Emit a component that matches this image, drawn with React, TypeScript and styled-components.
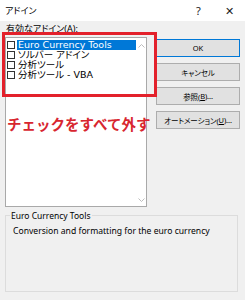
import { createGlobalStyle, styled } from 'styled-components';

const GlobalStyle = createGlobalStyle`
  html, body {
    margin: 0;
    padding: 0;
    background: #f0f0f0;
  }
  * {
    box-sizing: border-box;
  }
`;

const FONT = `'Noto Sans', 'Noto Sans CJK JP', sans-serif`;

/**
 * ダイアログ全体
 */
const Dialog = styled.div`
  position: relative;
  width: 245px;
  height: 300px;
  overflow: hidden;
  background: #f0f0f0;
  font-family: ${FONT};
  font-feature-settings: 'palt';
  color: #000;
`;

const TitleBar = styled.div`
  display: flex;
  align-items: center;
  height: 21px;
  padding-left: 5px;
  background: #fff;
  font-size: 9px;
`;

const Title = styled.div`
  flex: 1;
`;

const TitleButton = styled.div`
  width: 31px;
  text-align: center;
  font-size: 11px;
  color: #222;
`;

const Body = styled.div`
  padding: 0 5px;
`;

const MainRow = styled.div`
  display: flex;
  gap: 9px;
`;

const LeftColumn = styled.div`
  width: 142px;
  display: flex;
  flex-direction: column;
`;

const Label = styled.div`
  height: 16px;
  line-height: 16px;
  padding-left: 1px;
  font-size: 9px;
`;

const ListBox = styled.div`
  display: flex;
  height: 170px;
  background: #fff;
  border: 1px solid #a9a9a9;
`;

const Items = styled.div`
  flex: 1;
  padding-top: 2px;
`;

const Item = styled.div`
  display: flex;
  align-items: center;
  height: 10px;
  padding-left: 1px;
  gap: 2px;
`;

const CheckBox = styled.span`
  width: 8px;
  height: 8px;
  flex: none;
  border: 1px solid #333;
  background: #fff;
`;

const ItemText = styled.span<{ $selected?: boolean }>`
  flex: 1;
  height: 10px;
  line-height: 10px;
  padding-left: 1px;
  font-family: 'DejaVu Sans', 'Noto Sans CJK JP', sans-serif;
  font-size: 9.5px;
  white-space: nowrap;
  background: ${(p) => (p.$selected ? '#0078d7' : 'transparent')};
  color: ${(p) => (p.$selected ? '#fff' : '#000')};
`;

const ScrollBar = styled.div`
  width: 10px;
  display: flex;
  flex-direction: column;
  justify-content: space-between;
  align-items: center;
  padding: 6px 0 4px;
`;

const ButtonColumn = styled.div`
  display: flex;
  flex-direction: column;
  gap: 6px;
  padding-top: 18px;
`;

const Button = styled.div<{ $default?: boolean }>`
  width: 84px;
  height: 18px;
  display: flex;
  align-items: center;
  justify-content: center;
  background: #e1e1e1;
  border: 1px solid ${(p) => (p.$default ? '#0078d7' : '#adadad')};
  font-size: 7.5px;
  letter-spacing: -0.1px;
  white-space: nowrap;
  color: #000;
`;

const GroupBox = styled.fieldset`
  margin: 3px 2px 0 0;
  padding: 4px 7px 0;
  height: 82px;
  border: 1px solid #dcdcdc;
`;

const Legend = styled.legend`
  padding: 0 1px;
  margin-left: -3px;
  font-size: 8.5px;
  line-height: 11px;
`;

const Description = styled.div`
  font-size: 8.6px;
  line-height: 12px;
`;

/**
 * 画像上の注記（赤枠と赤文字）
 */
const RedFrame = styled.div`
  position: absolute;
  left: 2px;
  top: 32px;
  width: 155px;
  height: 65px;
  border: 3px solid #e3212b;
`;

const RedNote = styled.div`
  position: absolute;
  left: 7px;
  top: 114px;
  font-size: 14.5px;
  line-height: 20px;
  font-weight: bold;
  font-family: 'Noto Sans CJK JP', sans-serif;
  font-feature-settings: normal;
  color: #d8262f;
`;

const Chevron = ({ up }: { up?: boolean }) => (
  <svg width='7' height='4' viewBox='0 0 7 4'>
    <path
      d={up ? 'M0.5 3.5 L3.5 0.5 L6.5 3.5' : 'M0.5 0.5 L3.5 3.5 L6.5 0.5'}
      fill='none'
      stroke='#bdbdbd'
      strokeWidth='1'
    />
  </svg>
);

const addins = ['Euro Currency Tools', 'ソルバー アドイン', '分析ツール', '分析ツール - VBA'];

export default function App() {
  return (
    <>
      <GlobalStyle />
      <Dialog>
        <TitleBar>
          <Title>アドイン</Title>
          <TitleButton>?</TitleButton>
          <TitleButton>✕</TitleButton>
        </TitleBar>
        <Body>
          <MainRow>
            <LeftColumn>
              <Label>有効なアドイン(A):</Label>
              <ListBox>
                <Items>
                  {addins.map((name, index) => (
                    <Item key={name}>
                      <CheckBox />
                      <ItemText $selected={index === 0}>{name}</ItemText>
                    </Item>
                  ))}
                </Items>
                <ScrollBar>
                  <Chevron up />
                  <Chevron />
                </ScrollBar>
              </ListBox>
            </LeftColumn>
            <ButtonColumn>
              <Button $default>OK</Button>
              <Button>キャンセル</Button>
              <Button>
                参照(<u>B</u>)...
              </Button>
              <Button>
                オートメーション(<u>U</u>)...
              </Button>
            </ButtonColumn>
          </MainRow>
          <GroupBox>
            <Legend>Euro Currency Tools</Legend>
            <Description>Conversion and formatting for the euro currency</Description>
          </GroupBox>
        </Body>
        <RedFrame />
        <RedNote>チェックをすべて外す</RedNote>
      </Dialog>
    </>
  );
}
